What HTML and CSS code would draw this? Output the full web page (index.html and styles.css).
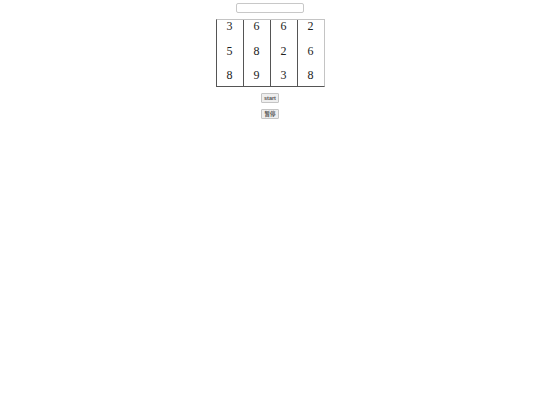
FILE: index.html
```html
<!DOCTYPE html>
<html>
<head>
<meta charset="utf-8">
<link rel="stylesheet" href="styles.css">
</head>
<body>
<div class="page">
  <input class="field" type="text">
  <div class="grid">
    <div class="col"><span>3</span><span>5</span><span>8</span></div>
    <div class="col"><span>6</span><span>8</span><span>9</span></div>
    <div class="col"><span>6</span><span>2</span><span>3</span></div>
    <div class="col"><span>2</span><span>6</span><span>8</span></div>
  </div>
  <button class="btn">start</button>
  <button class="btn">暂停</button>
</div>
</body>
</html>
```
FILE: styles.css
```css
html, body { margin: 0; padding: 0; background: #fff; }
.page {
  display: flex;
  flex-direction: column;
  align-items: center;
  padding-top: 3px;
  font-family: "Liberation Serif", serif;
}
.field {
  box-sizing: border-box;
  width: 68px;
  height: 10px;
  margin: 0;
  padding: 0;
  border: 1px solid #c8c8c8;
  border-radius: 2px;
  background: #fff;
}
.grid {
  display: flex;
  margin-top: 6px;
  border-top: 1px solid #c4c4c4;
  border-right: 1px solid #c4c4c4;
  border-bottom: 1px solid #555;
  border-left: 1px solid #555;
}
.col {
  box-sizing: border-box;
  width: 27px;
  height: 66px;
  display: flex;
  flex-direction: column;
  align-items: center;
  border-right: 1px solid #555;
  font-size: 12px;
  color: #222;
}
.col:last-child { border-right: none; width: 26px; }
.col span { flex-shrink: 0; line-height: 13px; height: 24.5px; }
.btn {
  box-sizing: border-box;
  margin: 0;
  padding: 0 2px;
  height: 10px;
  min-width: 18px;
  font-family: "Liberation Sans", "Noto Sans CJK SC", sans-serif;
  font-size: 5.5px;
  font-weight: bold;
  color: #555;
  background: #eee;
  border: 1px solid #c4c4c4;
  border-radius: 1px;
  line-height: 8px;
}
.btn:first-of-type { margin-top: 6px; }
.btn + .btn { margin-top: 6px; }
```
